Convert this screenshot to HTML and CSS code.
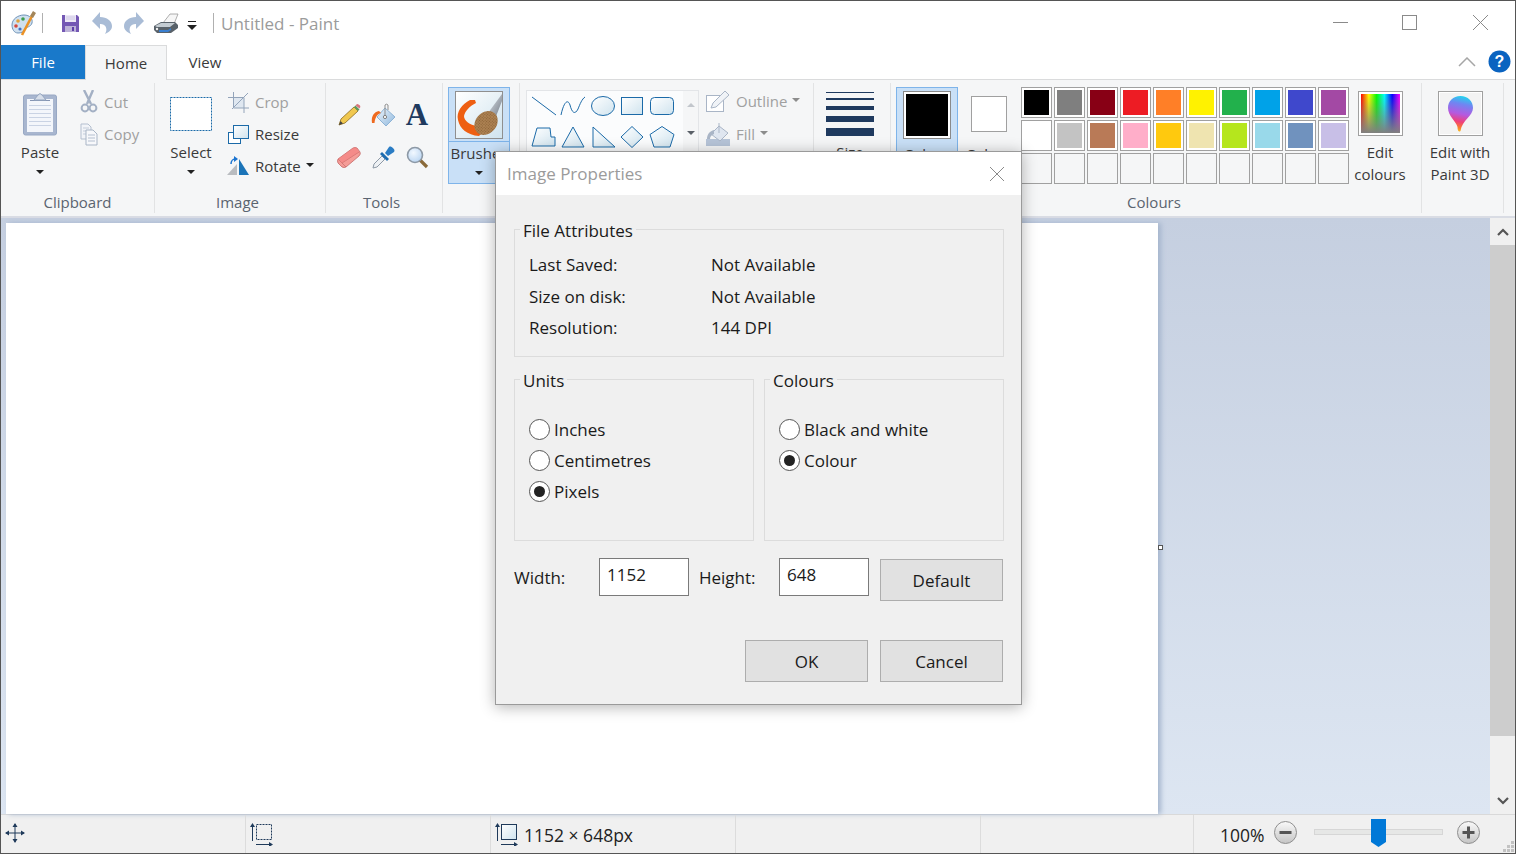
FILE: index.html
```html
<!DOCTYPE html>
<html lang="en">

<head>
    <meta charset="UTF-8">
    <title>Untitled - Paint</title>
    <link rel="stylesheet" href="styles.css">
</head>

<body>
    <svg width="0" height="0" class="defs">
        <defs>
            <linearGradient id="shapeFill" x1="0" y1="0" x2="1" y2="1">
                <stop offset="0%" stop-color="#ffffff"></stop>
                <stop offset="100%" stop-color="#cfe3ee"></stop>
            </linearGradient>
            <linearGradient id="dropFill" x1=".55" y1="0" x2=".4" y2="1">
                <stop offset="0%" stop-color="#22d3ee"></stop>
                <stop offset="22%" stop-color="#6f86f2"></stop>
                <stop offset="50%" stop-color="#b45ae0"></stop>
                <stop offset="72%" stop-color="#f0407a"></stop>
                <stop offset="88%" stop-color="#f87a30"></stop>
                <stop offset="100%" stop-color="#f8c020"></stop>
            </linearGradient>
            <linearGradient id="btnGrey" x1="0" y1="0" x2="0" y2="1">
                <stop offset="0%" stop-color="#fafafa"></stop>
                <stop offset="100%" stop-color="#c4c4c4"></stop>
            </linearGradient>
            <linearGradient id="handleFill" x1="0" y1="0" x2="1" y2="1">
                <stop offset="0%" stop-color="#dfe4ea"></stop>
                <stop offset="100%" stop-color="#6f7883"></stop>
            </linearGradient>
            <linearGradient id="bucketFill" x1="0" y1="0" x2="1" y2="1">
                <stop offset="0%" stop-color="#eef5fb"></stop>
                <stop offset="100%" stop-color="#8fb8de"></stop>
            </linearGradient>
            <radialGradient id="lensFill" cx=".4" cy=".35" r=".7">
                <stop offset="0%" stop-color="#f2f8ff"></stop>
                <stop offset="100%" stop-color="#b9d5f2"></stop>
            </radialGradient>
            <pattern id="bristle" width="2" height="2" patternUnits="userSpaceOnUse">
                <rect width="2" height="2" fill="#ac8152"></rect>
                <rect width="1" height="1" fill="#8a6236"></rect>
            </pattern>
        </defs>
    </svg>
    <div class="window">
        <div class="titlebar">
            <svg class="ico qa-app" width="26" height="26" viewBox="0 0 26 26">
                <path d="M1 15 C1 9 7 5 13 5 C19 5 22 9 21 13 C20 17 15 17 14 19 C13 22 10 23 7 23 C3 23 1 19 1 15 Z" fill="#cfe0ef" stroke="#6f93b8"></path>
                <circle cx="7" cy="11" r="1.8" fill="#e2a23a"></circle>
                <circle cx="12" cy="9" r="1.8" fill="#3f9d4d"></circle>
                <circle cx="5" cy="16" r="1.8" fill="#d8483b"></circle>
                <circle cx="9" cy="19" r="1.6" fill="#3f6fc4"></circle>
                <path d="M11 25 L21 6" stroke="#eb9226" stroke-width="2.6"></path>
                <path d="M19 6 L22 1 L25 3 L22 8 Z" fill="#a3865a"></path>
            </svg>
            <span class="qa-sep qa-sep-first"></span>
            <svg class="ico qa-save" width="17" height="17" viewBox="0 0 17 17">
                <path d="M0 0 H15 L17 2 V17 H0 Z" fill="#7458b4"></path>
                <rect x="3" y="0" width="11" height="7" fill="#ece8f6"></rect>
                <path d="M4 2 H13 M4 4 H13" stroke="#c9c0e2" stroke-width=".8"></path>
                <rect x="3" y="11" width="11" height="6" fill="#bdb3d8"></rect>
                <rect x="10" y="12" width="2" height="4" fill="#5d3fa8"></rect>
            </svg>
            <svg class="ico qa-undo" width="20" height="22" viewBox="0 0 20 22">
                <path d="M0 9 L8 0 V5 C15 5 20 9 20 14 C20 18 17 20 13 22 C15 19 15 15 12 13 C11 12 9 12 8 12 V17 Z" fill="#a9bcd6"></path>
            </svg>
            <svg class="ico qa-redo" width="20" height="22" viewBox="0 0 20 22">
                <path d="M20 9 L12 0 V5 C5 5 0 9 0 14 C0 18 3 20 7 22 C5 19 5 15 8 13 C9 12 11 12 12 12 V17 Z" fill="#a9bcd6"></path>
            </svg>
            <svg class="ico qa-print" width="25" height="21" viewBox="0 0 25 21">
                <path d="M9 10 L16 1 H24 L20 11 Z" fill="#f6f6f6" stroke="#9a9a9a" stroke-width=".8"></path>
                <path d="M0 13 L7 9 H21 L24 12 V15 L17 20 H3 L0 17 Z" fill="#59626a"></path>
                <path d="M1 13 L7 10 H21 L16 14 H3 Z" fill="#c4ccd2"></path>
                <path d="M5 17 H14 L17 15 V17 L14 19 H5 Z" fill="#3a7fd0"></path>
                <circle cx="3" cy="16" r="1.2" fill="#f0f0f0"></circle>
            </svg>
            <svg class="ico qa-more" width="10" height="9" viewBox="0 0 10 9">
                <rect x="1" y="0" width="8" height="1" fill="#222"></rect>
                <path d="M0 4 H10 L5 9 Z" fill="#222"></path>
            </svg>
            <span class="qa-sep qa-sep-title"></span>
            <span class="title">Untitled - Paint</span>
            <div class="win-controls">
                <svg class="ico" width="15" height="15" viewBox="0 0 15 15"><path d="M0 7.5 H15" stroke="#8a8a8a"></path></svg>
                <svg class="ico" width="15" height="15" viewBox="0 0 15 15"><rect x=".5" y=".5" width="14" height="14" fill="none" stroke="#8a8a8a"></rect></svg>
                <svg class="ico win-close" width="15" height="15" viewBox="0 0 15 15"><path d="M0 0 L15 15 M15 0 L0 15" stroke="#8a8a8a"></path></svg>
            </div>
        </div>

        <div class="tabs">
            <div class="tab tab-file">File</div>
            <div class="tab tab-home">Home</div>
            <div class="tab tab-view">View</div>
            <svg class="ico tabs-collapse" width="18" height="10" viewBox="0 0 18 10">
                <path d="M1 9 L9 1 L17 9" fill="none" stroke="#a6a6a6" stroke-width="1.5"></path>
            </svg>
            <svg class="ico tabs-help" width="23" height="23" viewBox="0 0 23 23">
                <circle cx="11.5" cy="11.5" r="11" fill="#0a63c0"></circle>
                <text x="11.5" y="17" text-anchor="middle" class="help-mark">?</text>
            </svg>
        </div>

        <div class="ribbon">
            <div class="group group-clipboard">
                <div class="group-body">
                    <div class="big">
                        <svg class="ico" width="36" height="44" viewBox="0 0 36 44">
                            <rect x="1.5" y="3" width="33" height="40" rx="2" fill="#a8b6cf" stroke="#98a8c4"></rect>
                            <rect x="5" y="7" width="26" height="33" fill="#f3f6fb"></rect>
                            <path d="M7 13.5 H29 M7 17.5 H29 M7 21.5 H29 M7 25.5 H29 M7 29.5 H29 M7 33.5 H29" stroke="#c9d3e4"></path>
                            <path d="M8 8.5 H28" stroke="#8595b3"></path>
                            <path d="M12 8 L16 3 Q18 0 20 3 L24 8 Z" fill="#d8dfea" stroke="#94a5bf"></path>
                        </svg>
                        <span class="big-label">Paste</span>
                        <span class="caret"></span>
                    </div>
                    <div class="small-col small-col-clip">
                        <div class="small small-off">
                            <svg class="ico" width="18" height="24" viewBox="0 0 18 24">
                                <path d="M4 0 L11 14 M13 0 L7 14" stroke="#a3b0c4" stroke-width="2.4"></path>
                                <circle cx="5" cy="18" r="3.4" fill="none" stroke="#a3b0c4" stroke-width="2"></circle>
                                <circle cx="13" cy="18" r="3.4" fill="none" stroke="#a3b0c4" stroke-width="2"></circle>
                            </svg>
                            <span>Cut</span>
                        </div>
                        <div class="small small-off">
                            <svg class="ico" width="18" height="23" viewBox="0 0 18 23">
                                <path d="M1 1 H8 L11 4 V16 H1 Z" fill="#f2f4f8" stroke="#b4bfcf"></path>
                                <path d="M3 5 H9 M3 8 H6 M3 11 H6" stroke="#c4cdda"></path>
                                <path d="M6 7 H13 L17 11 V22 H6 Z" fill="#f7f8fb" stroke="#a9b5c6"></path>
                                <path d="M8 12 H15 M8 15 H15 M8 18 H15" stroke="#b4bfcf"></path>
                            </svg>
                            <span>Copy</span>
                        </div>
                    </div>
                </div>
                <div class="group-label">Clipboard</div>
            </div>

            <div class="group group-image">
                <div class="group-body">
                    <div class="big big-select">
                        <svg class="ico" width="44" height="44" viewBox="0 0 44 44">
                            <rect x="1.5" y="5.5" width="41" height="33" fill="#fff" stroke="#1b6aa8" stroke-dasharray="2 1"></rect>
                        </svg>
                        <span class="big-label">Select</span>
                        <span class="caret"></span>
                    </div>
                    <div class="small-col small-col-image">
                        <div class="small small-off">
                            <svg class="ico" width="21" height="21" viewBox="0 0 21 21">
                                <path d="M5.5 5.5 H16 V16 H5.5 Z" fill="#dfe7f0"></path>
                                <path d="M0 5.5 H16 V21 M5.5 0 V16 H21" fill="none" stroke="#93a4ba"></path>
                                <path d="M4 17 L20 1" stroke="#93a4ba"></path>
                            </svg>
                            <span>Crop</span>
                        </div>
                        <div class="small">
                            <svg class="ico" width="21" height="19" viewBox="0 0 21 19">
                                <rect x=".5" y="7.5" width="12" height="11" fill="#fff" stroke="#1b6aa8"></rect>
                                <rect x="5.5" y=".5" width="15" height="13" fill="url(#shapeFill)" stroke="#1b6aa8"></rect>
                            </svg>
                            <span>Resize</span>
                        </div>
                        <div class="small">
                            <svg class="ico rotate-ico" width="23" height="20" viewBox="0 0 23 20">
                                <path d="M13 3 L23 19 H13 Z" fill="#1b74b8"></path>
                                <path d="M11 8 V19 H1 Z" fill="#b9bcc0"></path>
                                <path d="M5 8 C5 5 7 3 9 3" fill="none" stroke="#1b74d0" stroke-width="1.5"></path>
                                <path d="M8 0 L12 3 L8 6 Z" fill="#1b74d0"></path>
                            </svg>
                            <span>Rotate</span>
                            <span class="caret caret-inline"></span>
                        </div>
                    </div>
                </div>
                <div class="group-label">Image</div>
            </div>

            <div class="group group-tools">
                <div class="group-body">
                    <div class="tools-grid">
                        <svg class="ico" width="23" height="23" viewBox="0 0 23 23">
                            <path d="M1 22 L3 16 L16 4 L20 8 L7 20 Z" fill="#f0c850" stroke="#8a6a20" stroke-width=".8"></path>
                            <path d="M16 4 L17.5 2.5 L21.5 6.5 L20 8 Z" fill="#5c9a5c"></path>
                            <path d="M17.5 2.5 L19 1 Q20 0.5 22 2.5 Q23 4 21.5 5.5 Z" fill="#d9767c"></path>
                            <path d="M1 22 L2.5 18 L5 20.5 Z" fill="#444"></path>
                        </svg>
                        <svg class="ico" width="25" height="24" viewBox="0 0 25 24">
                            <path d="M14 5 L24 14 L15 23 L6 14 Z" fill="url(#bucketFill)" stroke="#8db3d6"></path>
                            <path d="M14 14 V2 A2 2 0 0 1 17 2 V7" fill="none" stroke="#8f8f8f"></path>
                            <circle cx="14" cy="14" r="1.6" fill="#fff" stroke="#7f7f7f"></circle>
                            <path d="M1 20 C0 13 3 9 8 8 L10 10 C6 11 4 15 3.5 20 Z" fill="#ee6a20"></path>
                        </svg>
                        <span class="tool-a">A</span>
                        <svg class="ico" width="24" height="21" viewBox="0 0 24 21">
                            <path d="M1 12 L16 1 Q18 0 20 1 L23 5 Q24 7 22 9 L9 20 Q7 21 5 20 L1 16 Q0 14 1 12 Z" fill="#f59c97" stroke="#c46a68" stroke-width=".8"></path>
                            <path d="M1 12 L5 16 L9 20 M5 16 L22 5" fill="none" stroke="#c46a68" stroke-width=".7"></path>
                            <path d="M1 12 L16 1 Q18 0 20 1 L22 5 L5 16 Z" fill="#f27d7d" opacity=".55"></path>
                        </svg>
                        <svg class="ico" width="23" height="23" viewBox="0 0 23 23">
                            <path d="M1 22 L2 18 L10 10 L13 13 L5 21 Z" fill="#eef1f4" stroke="#8d99a6"></path>
                            <path d="M8 8 L15 15 L17 13 L10 6 Z" fill="#1c6cb0"></path>
                            <path d="M13 7 L17 1 C19 -1 24 4 22 6 L16 10 Z" fill="#2a7cc4"></path>
                        </svg>
                        <svg class="ico" width="23" height="23" viewBox="0 0 23 23">
                            <path d="M14 14 L21 21" stroke="#8a6a3a" stroke-width="3.2"></path>
                            <circle cx="9" cy="9" r="7.5" fill="url(#lensFill)" stroke="#8d99a6" stroke-width="1.6"></circle>
                        </svg>
                    </div>
                </div>
                <div class="group-label">Tools</div>
            </div>

            <div class="group group-brushes">
                <div class="group-body">
                    <div class="btn-brushes">
                        <div class="btn-top">
                            <svg class="ico" width="48" height="48" viewBox="0 0 48 48">
                                <rect x=".5" y=".5" width="47" height="47" fill="url(#shapeFill)" stroke="#8f8f8f"></rect>
                                <path d="M20 9 L15 9 C7 13 1 21 3 29 C5 38 12 44 24 45 L28 41 L22 35 C15 34 9 30 9 25 C10 20 15 15 21 12 Z" fill="#ee5f12"></path>
                                <path d="M33 22 L47 3 V10 L40 28 Z" fill="url(#handleFill)"></path>
                                <ellipse cx="31" cy="32" rx="10.5" ry="13" transform="rotate(42 31 32)" fill="url(#bristle)"></ellipse>
                            </svg>
                        </div>
                        <span class="big-label">Brushes</span>
                        <span class="caret"></span>
                    </div>
                </div>
            </div>

            <div class="group group-shapes">
                <div class="group-body">
                    <div class="shapes-box">
                        <div class="shapes-grid">
                            <svg class="ico" width="26" height="22" viewBox="0 0 26 22"><path d="M1 2 L25 20" stroke="#1b6aa8"></path></svg>
                            <svg class="ico" width="26" height="22" viewBox="0 0 26 22"><path d="M1 20 C4 6 8 4 10 10 C12 18 15 20 18 14 C20 9 22 4 25 2" fill="none" stroke="#1b6aa8"></path></svg>
                            <svg class="ico" width="26" height="22" viewBox="0 0 26 22"><ellipse cx="13" cy="11" rx="11.5" ry="9.5" fill="url(#shapeFill)" stroke="#1b6aa8"></ellipse></svg>
                            <svg class="ico" width="26" height="22" viewBox="0 0 26 22"><rect x="2.5" y="2.5" width="21" height="17" fill="url(#shapeFill)" stroke="#1b6aa8"></rect></svg>
                            <svg class="ico" width="26" height="22" viewBox="0 0 26 22"><rect x="1.5" y="2.5" width="23" height="17" rx="4" fill="url(#shapeFill)" stroke="#1b6aa8"></rect></svg>
                            <svg class="ico" width="26" height="22" viewBox="0 0 26 22"><path d="M6 2 H19 L20 11 H24 V20 H1 Z" fill="url(#shapeFill)" stroke="#1b6aa8"></path></svg>
                            <svg class="ico" width="26" height="22" viewBox="0 0 26 22"><path d="M13 1 L24 21 H2 Z" fill="url(#shapeFill)" stroke="#1b6aa8"></path></svg>
                            <svg class="ico" width="26" height="22" viewBox="0 0 26 22"><path d="M3 1 L25 21 H3 Z" fill="url(#shapeFill)" stroke="#1b6aa8"></path></svg>
                            <svg class="ico" width="26" height="22" viewBox="0 0 26 22"><path d="M13 0.5 L24 11 L13 21.5 L2 11 Z" fill="url(#shapeFill)" stroke="#1b6aa8"></path></svg>
                            <svg class="ico" width="26" height="22" viewBox="0 0 26 22"><path d="M13 0.5 L25 8.5 L21 21 H5 L1 8.5 Z" fill="url(#shapeFill)" stroke="#1b6aa8"></path></svg>
                        </div>
                        <div class="shapes-scroll">
                            <span class="tri-up"></span>
                            <span class="tri-down"></span>
                        </div>
                    </div>
                    <div class="small-col small-col-shape">
                        <div class="small small-off">
                            <svg class="ico" width="24" height="22" viewBox="0 0 24 22">
                                <rect x=".5" y="5.5" width="17" height="16" fill="#fff" stroke="#a9b5c6"></rect>
                                <path d="M5 18 L7 13 L19 1 L23 5 L10 17 Z" fill="#f0f3f7" stroke="#a9b5c6"></path>
                            </svg>
                            <span>Outline</span>
                            <span class="caret caret-inline caret-off"></span>
                        </div>
                        <div class="small small-off">
                            <svg class="ico" width="24" height="24" viewBox="0 0 24 24">
                                <rect x="0" y="17" width="24" height="7" fill="#b6c4d8"></rect>
                                <path d="M13 4 L22 11 L14 19 L5 12 Z" fill="#dfe6f0" stroke="#a9b5c6"></path>
                                <path d="M13 11 V1" stroke="#a9b5c6"></path>
                                <path d="M1 17 C1 12 4 9 8 8 L8 12 C5 13 4 15 4 17 Z" fill="#a9b5c6"></path>
                            </svg>
                            <span>Fill</span>
                            <span class="caret caret-inline caret-off"></span>
                        </div>
                    </div>
                </div>
                <div class="group-label">Shapes</div>
            </div>

            <div class="group group-size">
                <div class="group-body">
                    <div class="big big-size">
                        <div class="size-lines">
                            <span class="size-line size-1"></span>
                            <span class="size-line size-2"></span>
                            <span class="size-line size-3"></span>
                            <span class="size-line size-4"></span>
                            <span class="size-line size-5"></span>
                        </div>
                        <span class="big-label">Size</span>
                        <span class="caret"></span>
                    </div>
                </div>
                <div class="group-label">Size</div>
            </div>

            <div class="group group-colours">
                <div class="group-body">
                    <div class="btn-colour">
                        <span class="colour-one"></span>
                        <span class="big-label big-label-two">Colour<br>1</span>
                    </div>
                    <div class="colour-two-col">
                        <span class="colour-two"></span>
                        <span class="big-label big-label-two">Colour<br>2</span>
                    </div>
                    <div class="swatches">
                        <span class="swatch"><i style="background:#000000"></i></span>
                        <span class="swatch"><i style="background:#7f7f7f"></i></span>
                        <span class="swatch"><i style="background:#880015"></i></span>
                        <span class="swatch"><i style="background:#ed1c24"></i></span>
                        <span class="swatch"><i style="background:#ff7f27"></i></span>
                        <span class="swatch"><i style="background:#fff200"></i></span>
                        <span class="swatch"><i style="background:#22b14c"></i></span>
                        <span class="swatch"><i style="background:#00a2e8"></i></span>
                        <span class="swatch"><i style="background:#3f48cc"></i></span>
                        <span class="swatch"><i style="background:#a349a4"></i></span>
                        <span class="swatch"><i style="background:#ffffff"></i></span>
                        <span class="swatch"><i style="background:#c3c3c3"></i></span>
                        <span class="swatch"><i style="background:#b97a57"></i></span>
                        <span class="swatch"><i style="background:#ffaec9"></i></span>
                        <span class="swatch"><i style="background:#ffc90e"></i></span>
                        <span class="swatch"><i style="background:#efe4b0"></i></span>
                        <span class="swatch"><i style="background:#b5e61d"></i></span>
                        <span class="swatch"><i style="background:#99d9ea"></i></span>
                        <span class="swatch"><i style="background:#7092be"></i></span>
                        <span class="swatch"><i style="background:#c8bfe7"></i></span>
                        <span class="swatch"></span>
                        <span class="swatch"></span>
                        <span class="swatch"></span>
                        <span class="swatch"></span>
                        <span class="swatch"></span>
                        <span class="swatch"></span>
                        <span class="swatch"></span>
                        <span class="swatch"></span>
                        <span class="swatch"></span>
                        <span class="swatch"></span>
                    </div>
                    <div class="big big-edit">
                        <span class="rainbow"></span>
                        <span class="big-label big-label-two">Edit<br>colours</span>
                    </div>
                </div>
                <div class="group-label">Colours</div>
            </div>

            <div class="group group-3d">
                <div class="group-body">
                    <div class="big big-3d">
                        <span class="paint3d">
                            <svg class="ico" width="27" height="38" viewBox="0 0 27 38">
                                <path d="M13.5 1 C21 1 26 6 26 13 C26 21 15 25 13.5 36 C12 37.5 10.5 36 10.5 32 C9 26 1 21 1 13 C1 6 6 1 13.5 1 Z" fill="url(#dropFill)"></path>
                            </svg>
                        </span>
                        <span class="big-label big-label-two">Edit with<br>Paint 3D</span>
                    </div>
                </div>
            </div>
        </div>

        <div class="workspace">
            <div class="canvas-area">
                <div class="canvas">
                    <span class="handle"></span>
                </div>
            </div>
            <div class="scrollbar">
                <div class="scroll-btn">
                    <svg class="ico" width="12" height="8" viewBox="0 0 12 8"><path d="M1 7 L6 2 L11 7" fill="none" stroke="#555" stroke-width="2.2"></path></svg>
                </div>
                <div class="scroll-thumb"></div>
                <div class="scroll-rest">
                    <svg class="ico" width="12" height="8" viewBox="0 0 12 8"><path d="M1 1 L6 6 L11 1" fill="none" stroke="#555" stroke-width="2.2"></path></svg>
                </div>
            </div>
        </div>

        <div class="statusbar">
            <div class="cell cell-pos">
                <svg class="ico" width="20" height="20" viewBox="0 0 20 20">
                    <path d="M10 1 V19 M1 10 H19" stroke="#1f3a5a"></path>
                    <path d="M10 0 L7.5 4 H12.5 Z M10 20 L7.5 16 H12.5 Z M0 10 L4 7.5 V12.5 Z M20 10 L16 7.5 V12.5 Z" fill="#1f3a5a"></path>
                </svg>
            </div>
            <div class="cell cell-sel">
                <svg class="ico" width="23" height="23" viewBox="0 0 23 23">
                    <rect x="6.5" y="1.5" width="15" height="15" fill="none" stroke="#1f3a5a" stroke-dasharray="2 1"></rect>
                    <path d="M2.5 3 V18 M6 21.5 H20" stroke="#1f3a5a"></path>
                    <path d="M2.5 0 L0 4 H5 Z M23 21.5 L19 19 V24 Z" fill="#1f3a5a"></path>
                </svg>
            </div>
            <div class="cell cell-size">
                <svg class="ico" width="23" height="23" viewBox="0 0 23 23">
                    <rect x="6.5" y="1.5" width="15" height="15" fill="url(#shapeFill)" stroke="#1f3a5a"></rect>
                    <path d="M2.5 3 V18 M6 21.5 H20" stroke="#1f3a5a"></path>
                    <path d="M2.5 0 L0 4 H5 Z M23 21.5 L19 19 V24 Z" fill="#1f3a5a"></path>
                </svg>
                <span>1152 × 648px</span>
            </div>
            <div class="cell cell-blank"></div>
            <div class="cell cell-blank2"></div>
            <div class="cell cell-zoom">
                <span class="zoom-text">100%</span>
                <svg class="ico zoom-btn" width="23" height="23" viewBox="0 0 23 23">
                    <circle cx="11.5" cy="11.5" r="11" fill="url(#btnGrey)" stroke="#8f8f8f"></circle>
                    <rect x="5.5" y="10" width="12" height="3" fill="#555"></rect>
                </svg>
                <div class="zoom-track">
                    <svg class="zoom-thumb" width="15" height="28" viewBox="0 0 15 28">
                        <path d="M0 0 H15 V23 L7.5 28 L0 23 Z" fill="#0078d7"></path>
                    </svg>
                </div>
                <svg class="ico zoom-btn" width="23" height="23" viewBox="0 0 23 23">
                    <circle cx="11.5" cy="11.5" r="11" fill="url(#btnGrey)" stroke="#8f8f8f"></circle>
                    <path d="M5.5 10 H10 V5.5 H13 V10 H17.5 V13 H13 V17.5 H10 V13 H5.5 Z" fill="#555"></path>
                </svg>
                <svg class="grip" width="11" height="11" viewBox="0 0 11 11">
                    <path d="M8 0 H11 V3 H8 Z M4 4 H7 V7 H4 Z M8 4 H11 V7 H8 Z M0 8 H3 V11 H0 Z M4 8 H7 V11 H4 Z M8 8 H11 V11 H8 Z" fill="#c2c2c2"></path>
                </svg>
            </div>
        </div>

        <div class="dialog">
            <div class="dialog-title">
                <span>Image Properties</span>
                <svg class="ico" width="16" height="16" viewBox="0 0 16 16"><path d="M1 1 L15 15 M15 1 L1 15" stroke="#8a8a8a"></path></svg>
            </div>
            <div class="dialog-body">
                <fieldset class="box box-file">
                    <legend>File Attributes</legend>
                    <div class="attr"><span class="attr-name">Last Saved:</span><span>Not Available</span></div>
                    <div class="attr"><span class="attr-name">Size on disk:</span><span>Not Available</span></div>
                    <div class="attr"><span class="attr-name">Resolution:</span><span>144 DPI</span></div>
                </fieldset>
                <div class="box-row">
                    <fieldset class="box box-choice">
                        <legend>Units</legend>
                        <div class="radio"><span class="radio-dot"></span>Inches</div>
                        <div class="radio"><span class="radio-dot"></span>Centimetres</div>
                        <div class="radio"><span class="radio-dot radio-on"></span>Pixels</div>
                    </fieldset>
                    <fieldset class="box box-choice">
                        <legend>Colours</legend>
                        <div class="radio"><span class="radio-dot"></span>Black and white</div>
                        <div class="radio"><span class="radio-dot radio-on"></span>Colour</div>
                    </fieldset>
                </div>
                <div class="size-row">
                    <span class="size-label size-label-w">Width:</span>
                    <div class="field">1152</div>
                    <span class="size-label size-label-h">Height:</span>
                    <div class="field">648</div>
                    <div class="btn btn-default">Default</div>
                </div>
                <div class="actions">
                    <div class="btn">OK</div>
                    <div class="btn">Cancel</div>
                </div>
            </div>
        </div>
    </div>
</body>

</html>
```

FILE: styles.css
```css
* {
    box-sizing: border-box;
}

html,
body {
    margin: 0;
    height: 854px;
    overflow: hidden;
}

body {
    font-family: "Open Sans", "Noto Sans", sans-serif;
    font-size: 15px;
    color: #3a3a3a;
}

.defs {
    position: absolute;
}

.ico {
    display: block;
    flex: none;
}

.window {
    position: relative;
    display: flex;
    flex-direction: column;
    width: 1516px;
    height: 854px;
    border: 1px solid #555;
    background: #fff;
}

/* title bar */
.titlebar {
    display: flex;
    align-items: center;
    flex: none;
    height: 44px;
    padding-left: 10px;
}

.qa-sep {
    width: 1px;
    height: 20px;
    background: #b0b0b0;
}

.qa-sep-first {
    margin-left: 5px;
}

.qa-save {
    margin-left: 19px;
}

.qa-undo {
    margin-left: 13px;
}

.qa-redo {
    margin-left: 12px;
}

.qa-print {
    margin-left: 10px;
}

.qa-more {
    margin-left: 8px;
    margin-top: 4px;
}

.qa-sep-title {
    margin-left: 16px;
}

.title {
    margin-left: 7px;
    font-size: 17px;
    color: #9b9b9b;
}

.win-controls {
    display: flex;
    gap: 54px;
    margin-left: auto;
    margin-right: 27px;
    margin-bottom: 2px;
}

.win-close {
    margin-left: 2px;
}

/* tabs */
.tabs {
    display: flex;
    align-items: stretch;
    flex: none;
    height: 35px;
    border-bottom: 1px solid #dadbdc;
}

.tab {
    display: flex;
    align-items: center;
    justify-content: center;
}

.tab-file {
    width: 84px;
    background: #1979ca;
    color: #fff;
}

.tab-home {
    width: 82px;
    height: 35px;
    padding-bottom: 1px;
    background: #f5f6f7;
    border: 1px solid #dadbdc;
    border-bottom: 0;
}

.tab-view {
    width: 76px;
}

.tabs-collapse {
    margin: 12px 0 0 auto;
}

.tabs-help {
    margin: 5px 4px 0 12px;
}

.help-mark {
    font-family: "Liberation Sans", sans-serif;
    font-size: 16px;
    font-weight: bold;
    fill: #fff;
}

/* ribbon */
.ribbon {
    display: flex;
    flex: none;
    height: 138px;
    background: #f5f6f7;
    border-bottom: 2px solid #d9dce4;
}

.group {
    display: flex;
    flex-direction: column;
    flex: none;
    margin: 3px 0;
    padding-top: 3px;
    border-right: 1px solid #e2e3e4;
}

.group-body {
    display: flex;
    flex: 1;
}

.group-label {
    height: 20px;
    line-height: 18px;
    text-align: center;
    color: #5b6470;
}

.group-clipboard {
    width: 154px;
}

.group-image {
    width: 171px;
}

.group-image .group-label,
.group-tools .group-label {
    padding-right: 5px;
}

.group-tools {
    width: 117px;
}

.group-brushes {
    width: 77px;
}

.group-shapes {
    width: 294px;
}

.group-size {
    width: 77px;
}

.group-colours {
    width: 531px;
}

.group-colours .group-label {
    padding-right: 4px;
}

.group-3d {
    width: 82px;
}

.big {
    display: flex;
    flex-direction: column;
    align-items: center;
    padding-top: 6px;
}

.big-label {
    margin-top: 6px;
    line-height: 21px;
    white-space: nowrap;
}

.big-label-two {
    line-height: 22px;
    text-align: center;
}

.caret {
    width: 0;
    height: 0;
    margin-top: 7px;
    border-left: 4px solid transparent;
    border-right: 4px solid transparent;
    border-top: 4px solid #222;
}

.caret-inline {
    margin: 0 0 2px 5px;
}

.caret-off {
    border-top-color: #8c8c8c;
}

.group-clipboard .big {
    width: 42px;
    margin-left: 18px;
}

.small-col {
    display: flex;
    flex-direction: column;
}

.small-col-clip {
    margin-left: 19px;
}

.small {
    display: flex;
    align-items: center;
    height: 32px;
    white-space: nowrap;
}

.small svg {
    margin-right: 6px;
}

.small svg.rotate-ico {
    margin-left: -2px;
    margin-right: 6px;
}

.small-off {
    color: #a0a0a0;
}

.big-select {
    width: 44px;
    margin-left: 14px;
}

.small-col-image {
    margin-left: 15px;
}

.tools-grid {
    display: grid;
    grid-template-columns: repeat(3, 34px);
    grid-template-rows: 23px 23px;
    row-gap: 20px;
    justify-items: center;
    align-items: center;
    margin: 17px 0 0 6px;
}

.tool-a {
    font-family: "Liberation Serif", serif;
    font-size: 31px;
    font-weight: bold;
    line-height: 23px;
    color: #1f3a5f;
}

.btn-brushes {
    display: flex;
    flex-direction: column;
    align-items: center;
    width: 62px;
    height: 97px;
    margin: 1px 0 0 5px;
    background: #c9e0f7;
    border: 1px solid #7eb4ea;
}

.btn-top {
    display: flex;
    justify-content: center;
    align-self: stretch;
    height: 54px;
    padding-top: 3px;
    border-bottom: 1px solid #7eb4ea;
}

.btn-brushes .big-label {
    margin-top: 1px;
}

.shapes-box {
    display: flex;
    width: 173px;
    height: 92px;
    margin: 4px 0 0 6px;
    background: #fbfcfd;
    border: 1px solid #e3e5e8;
}

.shapes-grid {
    display: grid;
    grid-template-columns: repeat(5, 29.5px);
    grid-template-rows: repeat(2, 31px);
    justify-items: center;
    align-items: center;
    width: 156px;
    padding-left: 2px;
    margin-top: -1px;
}

.shapes-scroll {
    display: flex;
    flex-direction: column;
    align-items: center;
    flex: 1;
    padding-top: 12px;
    gap: 24px;
    background: #f5f6f7;
}

.tri-up,
.tri-down {
    width: 0;
    height: 0;
    border-left: 4px solid transparent;
    border-right: 4px solid transparent;
}

.tri-up {
    border-bottom: 4px solid #c2c6cc;
}

.tri-down {
    border-top: 4px solid #5a6068;
}

.small-col-shape {
    margin: -1px 0 0 7px;
    gap: 1px;
}

.big-size {
    width: 48px;
    margin-left: 12px;
}

.size-lines {
    display: flex;
    flex-direction: column;
    width: 48px;
    height: 44px;
}

.size-line {
    background: #1f3a5f;
}

.size-1 {
    height: 1px;
}

.size-2 {
    height: 2px;
    margin-top: 5px;
}

.size-3 {
    height: 4px;
    margin-top: 6px;
}

.size-4 {
    height: 6px;
    margin-top: 6px;
}

.size-5 {
    height: 8px;
    margin-top: 6px;
}

.btn-colour {
    display: flex;
    flex-direction: column;
    align-items: center;
    width: 62px;
    height: 97px;
    margin: 1px 0 0 5px;
    padding-top: 3px;
    background: #c9e0f7;
    border: 1px solid #7eb4ea;
}

.colour-one {
    flex: none;
    width: 48px;
    height: 48px;
    background: #000;
    border: 1px solid #8a8a8a;
    outline: 2px solid #fff;
    outline-offset: -3px;
}

.btn-colour .big-label {
    margin-top: 4px;
}

.colour-two-col {
    display: flex;
    flex-direction: column;
    align-items: center;
    width: 62px;
    padding-top: 10px;
}

.colour-two {
    flex: none;
    width: 36px;
    height: 36px;
    background: #fff;
    border: 1px solid #a0a0a0;
}

.colour-two-col .big-label {
    margin-top: 11px;
}

.swatches {
    display: grid;
    grid-template-columns: repeat(10, 31px);
    grid-template-rows: repeat(3, 31px);
    gap: 2px;
    margin: 1px 0 0 1px;
}

.swatch {
    display: block;
    padding: 2px;
    border: 1px solid #a0a0a0;
    background: #fff;
}

.swatch:nth-child(n+21) {
    background: none;
}

.swatch i {
    display: block;
    height: 100%;
}

.big-edit {
    width: 62px;
}

.rainbow {
    flex: none;
    width: 43px;
    height: 43px;
    border: 2px solid #fff;
    outline: 1px solid #a0a0a0;
    background:
        linear-gradient(to bottom, rgba(128, 128, 128, 0), #808080),
        linear-gradient(to right, #ff0000, #ffff00, #00ff00, #00ffff, #0000ff, #ff00ff);
}

.big-3d {
    width: 76px;
}

.paint3d {
    display: flex;
    align-items: center;
    justify-content: center;
    width: 45px;
    height: 45px;
    margin-top: -1px;
    background: #f3f3f3;
    border: 1px solid #a0a0a0;
    outline: 1px solid #fff;
    outline-offset: -2px;
}

.big-3d .big-label {
    margin-top: 5px;
}

/* workspace */
.workspace {
    display: flex;
    flex: 1;
    min-height: 0;
}

.canvas-area {
    flex: 1;
    display: flex;
    padding: 5px 0 0 5px;
    background: linear-gradient(to bottom, #c5cfe0, #dde6f2);
}

.canvas {
    position: relative;
    width: 1152px;
    background: #fff;
    box-shadow: 3px 0 5px #a5b5cd;
}

.handle {
    position: absolute;
    right: -5px;
    top: 322px;
    width: 5px;
    height: 5px;
    background: #fff;
    border: 1px solid #555;
}

.scrollbar {
    display: flex;
    flex-direction: column;
    flex: none;
    width: 25px;
    background: #f0f0f0;
}

.scroll-btn {
    display: flex;
    align-items: center;
    justify-content: center;
    height: 27px;
}

.scroll-thumb {
    height: 491px;
    background: #cdcdcd;
}

.scroll-rest {
    display: flex;
    align-items: flex-end;
    justify-content: center;
    flex: 1;
    padding-bottom: 9px;
}

/* status bar */
.statusbar {
    display: flex;
    flex: none;
    height: 39px;
    background: #f0f0f0;
    border-top: 1px solid #d9d9d9;
    font-size: 17.5px;
    color: #222;
}

.cell {
    position: relative;
    display: flex;
    align-items: center;
    flex: none;
    height: 100%;
    border-right: 1px solid #dcdcdc;
}

.cell-pos {
    width: 245px;
    padding: 0 0 2px 4px;
}

.cell-sel {
    width: 245px;
    padding-left: 4px;
}

.cell-size {
    width: 245px;
    padding-left: 4px;
}

.cell-size span {
    margin-left: 6px;
    margin-top: 2px;
}

.cell-blank {
    width: 245px;
}

.cell-blank2 {
    width: 213px;
}

.cell-zoom {
    flex: 1;
    padding-left: 26px;
    border-right: 0;
}

.zoom-text {
    width: 54px;
    margin-top: 2px;
}

.zoom-btn {
    margin-bottom: 4px;
}

.zoom-track {
    position: relative;
    width: 129px;
    height: 6px;
    margin: 0 14px 4px 17px;
    background: #e6e7e6;
    border: 1px solid #d6d6d6;
}

.zoom-thumb {
    position: absolute;
    left: 56px;
    top: -11px;
}

.grip {
    position: absolute;
    right: 1px;
    bottom: 1px;
}

/* dialog */
.dialog {
    position: absolute;
    left: 494px;
    top: 150px;
    display: flex;
    flex-direction: column;
    width: 527px;
    height: 554px;
    background: #f0f0f0;
    border: 1px solid #9a9a9a;
    box-shadow: 0 2px 14px rgba(0, 0, 0, .3);
    font-size: 17px;
    color: #1a1a1a;
}

.dialog-title {
    display: flex;
    align-items: center;
    justify-content: space-between;
    flex: none;
    height: 43px;
    padding: 0 16px 0 11px;
    background: #fff;
    color: #9b9b9b;
}

.dialog-body {
    flex: 1;
    padding: 20px 17px 0 18px;
}

.box {
    margin: 0;
    padding: 0 14px;
    border: 1px solid #dcdcdc;
    min-width: 0;
}

.box legend {
    margin-left: -9px;
    padding: 4px 3px 0;
    line-height: 24px;
}

.box-file {
    height: 142px;
}

.attr {
    display: flex;
    height: 32px;
    line-height: 24px;
}

.attr:first-of-type {
    margin-top: 10px;
}

.attr:last-child {
    margin-top: -1px;
}

.attr-name {
    width: 182px;
}

.box-row {
    display: flex;
    gap: 10px;
    margin-top: 8px;
}

.box-choice {
    flex: 1;
    height: 176px;
    padding-top: 21px;
}

.radio {
    display: flex;
    align-items: center;
    height: 31px;
}

.radio-dot {
    position: relative;
    width: 21px;
    height: 21px;
    margin-right: 4px;
    background: #fff;
    border: 1px solid #555;
    border-radius: 50%;
}

.radio-on::after {
    content: "";
    position: absolute;
    left: 4px;
    top: 4px;
    width: 11px;
    height: 11px;
    background: #222;
    border-radius: 50%;
}

.size-row {
    display: flex;
    align-items: flex-start;
    margin-top: 17px;
}

.size-label {
    margin-top: 8px;
    line-height: 24px;
}

.size-label-w {
    width: 85px;
}

.size-label-h {
    width: 90px;
    padding-left: 10px;
}

.field {
    width: 90px;
    height: 38px;
    padding: 4px 7px;
    line-height: 24px;
    background: #fff;
    border: 1px solid #7a7a7a;
}

.btn {
    display: flex;
    align-items: center;
    justify-content: center;
    width: 123px;
    height: 42px;
    background: #e1e1e1;
    border: 1px solid #adadad;
}

.btn-default {
    margin: 1px 0 0 11px;
}

.actions {
    display: flex;
    justify-content: flex-end;
    gap: 12px;
    margin: 39px 1px 0 0;
}
```
